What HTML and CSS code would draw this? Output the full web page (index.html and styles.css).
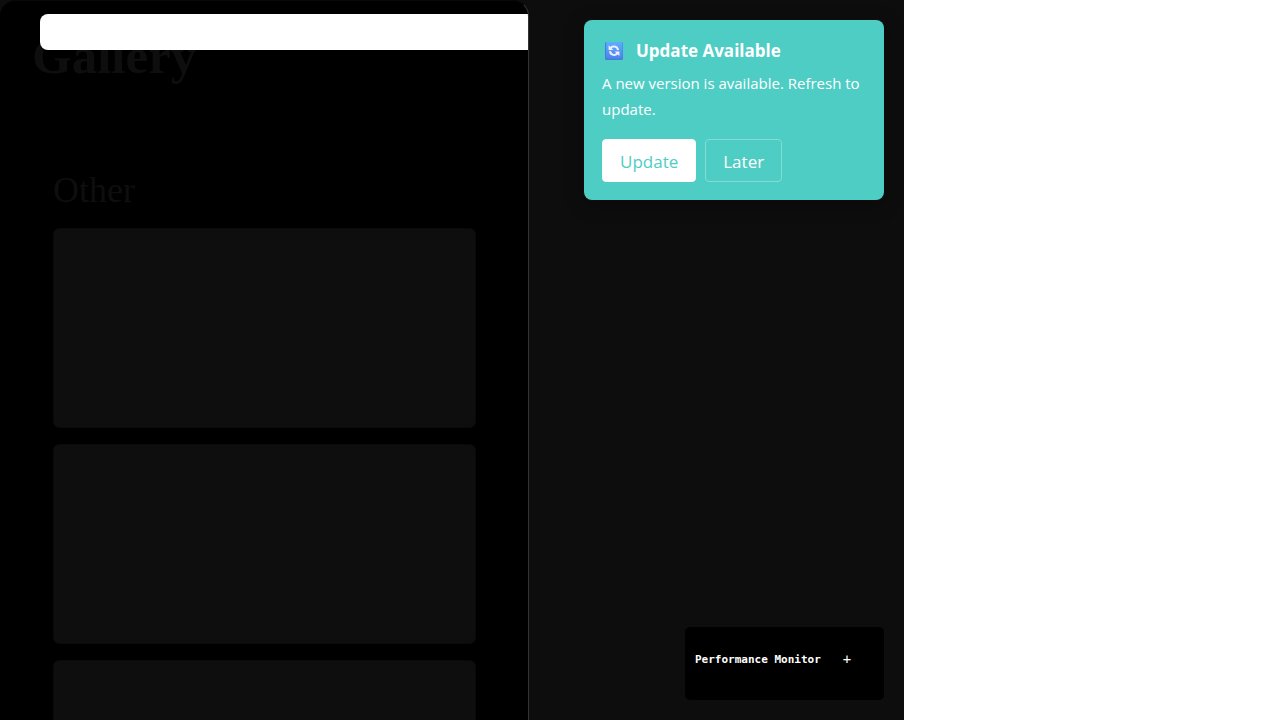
FILE: index.html
```html
<!DOCTYPE html>
<html lang="en">
<head>
<meta charset="utf-8">
<title>Gallery</title>
<link rel="stylesheet" href="styles.css">
</head>
<body>
<div class="page">
  <div class="app">
    <main class="panel">
      <input class="search" type="text" aria-label="Search gallery">
      <h1 class="title">Gallery</h1>
      <section class="group">
        <h2 class="group-title">Other</h2>
        <div class="cards">
          <article class="card"></article>
          <article class="card"></article>
          <article class="card"></article>
        </div>
      </section>
    </main>
    <aside class="side">
      <section class="notice">
        <h2 class="notice-title">
          <svg class="notice-icon" viewBox="0 0 20 20" aria-hidden="true">
            <defs><linearGradient id="tile" x1="0" y1="0" x2="0" y2="1"><stop offset="0" stop-color="#5caeff"/><stop offset="1" stop-color="#4f83ed"/></linearGradient></defs>
            <rect x="1" y="1" width="18" height="18" rx="1.5" fill="#3f7fd8"/>
            <rect x="2" y="1" width="16.5" height="16.5" rx="1" fill="url(#tile)"/>
            <path d="M6.2 7.2C8 4.8 13.6 4.6 14 9.2M13.8 12C12 14.8 6.4 14.8 6 10.2" fill="none" stroke="#f1eefc" stroke-width="2"/>
            <path d="M4.6 4.2V9H9.4ZM15.4 15V10.4H10.6Z" fill="#f1eefc"/>
          </svg>
          <span>Update Available</span>
        </h2>
        <p class="notice-text">A new version is available. Refresh to update.</p>
        <div class="actions">
          <button class="button button-primary" type="button">Update</button>
          <button class="button button-outline" type="button">Later</button>
        </div>
      </section>
      <section class="monitor">
        <strong>Performance Monitor</strong>
        <button class="monitor-toggle" type="button" aria-label="Expand performance monitor">+</button>
      </section>
    </aside>
  </div>
</div>
</body>
</html>
```
FILE: styles.css
```css
* { box-sizing: border-box; }
body { margin: 0; background: #fff; font-family: "Open Sans", "Noto Sans", sans-serif; }
h1, h2, p { margin: 0; }
button { font-family: inherit; cursor: pointer; }
.page { display: grid; grid-template-columns: 904fr 377fr; height: 100vh; overflow: hidden; }
.app { display: grid; grid-template-columns: 529fr 375fr; min-height: 0; background: #0d0d0d; }
.panel {
  position: relative;
  min-height: 0;
  overflow: hidden;
  padding: 27px 52px 0 53px;
  background: #000;
  border: 1px solid #333;
  border-top-color: #0b0704;
  border-bottom: 0;
  border-left: 0;
  border-radius: 16px 16px 0 0;
  color: #0e0e0e;
  font-family: "Liberation Serif", serif;
}
.search {
  position: absolute;
  top: 13px;
  left: 40px;
  right: 0;
  height: 36px;
  padding: 0 12px;
  border: 0;
  border-radius: 8px 0 0 8px;
  background: #fff;
}
.title { margin-left: -21px; font-family: "Liberation Serif", serif; font-size: 51px; line-height: 56px; }
.group { padding-top: 84px; }
.group-title { font-size: 36px; line-height: 44px; font-weight: 400; }
.cards { display: grid; gap: 16px; padding-top: 16px; }
.card { height: 200px; border: 1px solid #0a0a0a; border-radius: 6px; background: #0e0e0e; }
.side { display: flex; flex-direction: column; align-items: flex-end; justify-content: space-between; padding: 20px; }
.notice {
  width: 300px;
  padding: 18px;
  border-radius: 8px;
  background: #4ecdc4;
  color: #fff;
  box-shadow: 0 4px 20px rgba(0, 0, 0, 0.3);
}
.notice-title { display: flex; align-items: center; gap: 12px; padding-left: 2px; font-size: 17px; line-height: 26px; font-weight: 700; }
.notice-icon { width: 20px; height: 20px; }
.notice-text { padding-top: 6px; font-size: 15px; line-height: 26px; }
.actions { display: flex; gap: 9px; padding-top: 17px; }
.button { height: 43px; padding: 1px 17px 0; border: 1px solid #fff; border-radius: 4px; font-size: 17px; }
.button-primary { background: #fff; color: #4ecdc4; }
.button-outline { border-color: #83dcd6; background: transparent; color: #fff; }
.monitor {
  display: flex;
  align-items: center;
  gap: 20px;
  width: 199px;
  height: 73px;
  padding: 0 10px 9px;
  border-radius: 5px;
  background: #000;
  color: #fff;
  font-family: "DejaVu Sans Mono", monospace;
  font-size: 11px;
}
.monitor-toggle { padding: 0 2px; border: 0; background: transparent; color: #fff; font-size: 14px; }
```
